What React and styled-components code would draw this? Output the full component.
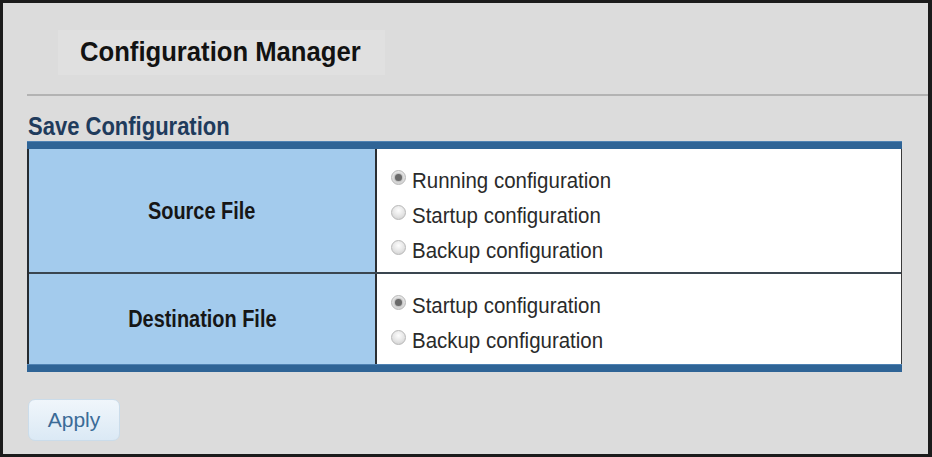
import React from 'react'
import styled, { createGlobalStyle } from 'styled-components'

const GlobalStyle = createGlobalStyle`
    html, body {
        margin: 0;
        padding: 0;
        background: #1b1b1b;
    }
    * {
        box-sizing: border-box;
    }
`

const sourceOptions = [
    { label: 'Running configuration', checked: true },
    { label: 'Startup configuration', checked: false },
    { label: 'Backup configuration', checked: false },
]

const destinationOptions = [
    { label: 'Startup configuration', checked: true },
    { label: 'Backup configuration', checked: false },
]

const OptionList = ({ options }) => (
    <Options>
        {options.map((opt) => (
            <Option key={opt.label}>
                <Radio checked={opt.checked} />
                <OptionText>{opt.label}</OptionText>
            </Option>
        ))}
    </Options>
)

export default function App() {
    return (
        <>
            <GlobalStyle />
            <Frame>
                <TitleBox>
                    <Title>Configuration Manager</Title>
                </TitleBox>
                <Divider />
                <SectionTitle>
                    <SectionText>Save Configuration</SectionText>
                </SectionTitle>
                <Table>
                    <TableBar />
                    <TableBody>
                        <Row height={123}>
                            <LabelCell>
                                <Label>Source File</Label>
                            </LabelCell>
                            <OptionCell>
                                <OptionList options={sourceOptions} />
                            </OptionCell>
                        </Row>
                        <Row height={92} divided>
                            <LabelCell>
                                <Label>Destination File</Label>
                            </LabelCell>
                            <OptionCell>
                                <OptionList options={destinationOptions} />
                            </OptionCell>
                        </Row>
                    </TableBody>
                    <TableBar />
                </Table>
                <ApplyButton>Apply</ApplyButton>
            </Frame>
        </>
    )
}

const Frame = styled.div`
    width: 932px;
    height: 457px;
    border-style: solid;
    border-color: #1b1b1b;
    border-width: 3px 4px 3px 3px;
    background: #dcdcdc;
    display: flex;
    flex-direction: column;
    font-family: "Liberation Sans", Arial, sans-serif;
    overflow: hidden;
`

const TitleBox = styled.div`
    margin: 27px 0 0 55px;
    width: 327px;
    height: 45px;
    background: #e0e0e0;
    display: flex;
    align-items: center;
    padding-left: 22px;
`

const Title = styled.span`
    display: inline-block;
    font-size: 27px;
    font-weight: bold;
    color: #121212;
    transform: scaleX(0.95);
    transform-origin: left center;
    white-space: nowrap;
`

const Divider = styled.div`
    margin: 19px 0 0 24px;
    height: 2px;
    background: #b3b3b3;
`

const SectionTitle = styled.div`
    margin: 16px 0 1px 25px;
    height: 28px;
    line-height: 28px;
`

const SectionText = styled.span`
    display: inline-block;
    font-size: 25px;
    font-weight: bold;
    color: #1f3b5c;
    transform: scaleX(0.88);
    transform-origin: left center;
    white-space: nowrap;
`

const Table = styled.div`
    margin-left: 24px;
    width: 875px;
    display: flex;
    flex-direction: column;
`

const TableBar = styled.div`
    height: 8px;
    background: #2f6496;
    border-top: 1px solid #4f82b3;
`

const TableBody = styled.div`
    border-left: 2px solid #262b30;
    border-right: 1px solid #3a3a3a;
`

const Row = styled.div`
    display: grid;
    grid-template-columns: 348px 1fr;
    height: ${(p) => p.height}px;
    border-top: ${(p) => (p.divided ? '2px solid #3a4650' : 'none')};
`

const LabelCell = styled.div`
    background: #a3cbed;
    border-right: 2px solid #2b2f33;
    display: flex;
    align-items: center;
    justify-content: center;
`

const Label = styled.span`
    display: inline-block;
    font-size: 24px;
    font-weight: bold;
    color: #161616;
    transform: scaleX(0.83);
    white-space: nowrap;
`

const OptionCell = styled.div`
    background: #ffffff;
    padding: 14px 0 0 15px;
`

const Options = styled.div`
    display: flex;
    flex-direction: column;
`

const Option = styled.div`
    display: flex;
    align-items: center;
    height: 35px;
`

const Radio = styled.span`
    flex: none;
    width: 15px;
    height: 15px;
    margin: -7px 6px 0 -1px;
    border-radius: 50%;
    border: 1px solid #b8b8b8;
    background: radial-gradient(circle at 50% 35%, #fdfdfd 0%, #e4e4e4 55%, #c9c9c9 100%);
    display: flex;
    align-items: center;
    justify-content: center;

    &::after {
        content: '';
        display: ${(p) => (p.checked ? 'block' : 'none')};
        width: 7px;
        height: 7px;
        border-radius: 50%;
        background: #6a6a6a;
        box-shadow: 0 0 2px 1px #b0b0b0;
    }
`

const OptionText = styled.span`
    display: inline-block;
    font-size: 22px;
    color: #2a2a2a;
    transform: scaleX(0.93);
    transform-origin: left center;
    white-space: nowrap;
`

const ApplyButton = styled.button`
    margin: 27px 0 0 25px;
    width: 92px;
    height: 42px;
    border: 1px solid #cbdcea;
    border-radius: 7px;
    background: linear-gradient(#f0f6fb, #dbe9f5);
    color: #3b6b97;
    font-family: "Liberation Sans", Arial, sans-serif;
    font-size: 21px;
    padding: 0;
    cursor: pointer;
`
